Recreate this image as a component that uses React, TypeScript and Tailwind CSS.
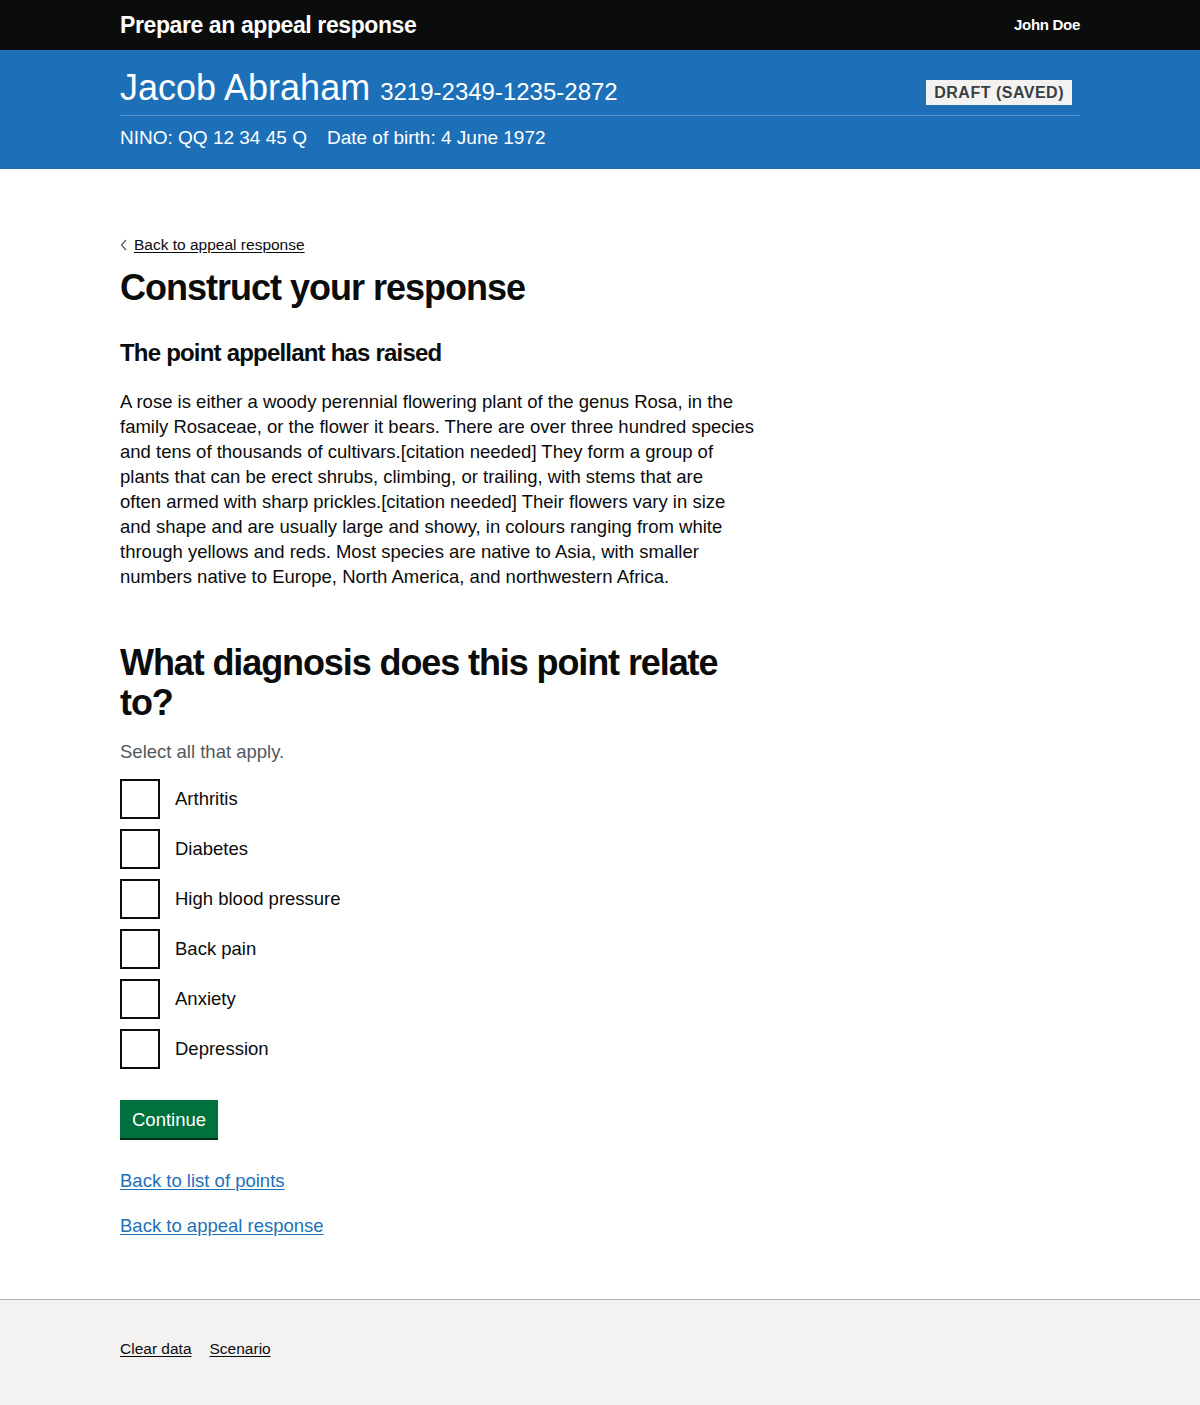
import { useState } from 'react';

const diagnoses = ['Arthritis', 'Diabetes', 'High blood pressure', 'Back pain', 'Anxiety', 'Depression'];

const pointLines = [
  'A rose is either a woody perennial flowering plant of the genus Rosa, in the',
  'family Rosaceae, or the flower it bears. There are over three hundred species',
  'and tens of thousands of cultivars.[citation needed] They form a group of',
  'plants that can be erect shrubs, climbing, or trailing, with stems that are',
  'often armed with sharp prickles.[citation needed] Their flowers vary in size',
  'and shape and are usually large and showy, in colours ranging from white',
  'through yellows and reds. Most species are native to Asia, with smaller',
  'numbers native to Europe, North America, and northwestern Africa.',
];

const font = "font-['Liberation_Sans',Arial,sans-serif]";

export default function App() {
  const [checked, setChecked] = useState<string[]>([]);

  const toggle = (d: string) =>
    setChecked(checked.includes(d) ? checked.filter((c) => c !== d) : [...checked, d]);

  return (
    <div className={`${font} min-h-[1405px] flex flex-col bg-white text-[#0b0c0c]`}>
      {/* Header */}
      <header className="bg-[#0b0c0c] h-[50px]">
        <div className="max-w-[960px] mx-auto h-full flex items-center justify-between">
          <span className="text-white font-bold text-[23px] tracking-[-0.4px]">Prepare an appeal response</span>
          <span className="text-white font-bold text-[15px] tracking-[-0.3px]">John Doe</span>
        </div>
      </header>

      {/* Appellant banner */}
      <div className="bg-[#1d70b8] text-white h-[119px]">
        <div className="max-w-[960px] mx-auto pt-[18px]">
          <div className="flex items-end justify-between border-b border-[#5694ca] pb-[5px]">
            <div className="flex items-baseline gap-[10px]">
              <span className="text-[36px] leading-[40px]">Jacob Abraham</span>
              <span className="text-[24px]">3219-2349-1235-2872</span>
            </div>
            <span className="mr-[8px] mb-[5px] bg-[#f3f2f1] text-[#383f43] font-bold uppercase text-[16px] tracking-[0.5px] leading-[25px] px-[8px]">
              Draft (saved)
            </span>
          </div>
          <div className="flex gap-[20px] text-[19px] pt-[8px]">
            <span>NINO: QQ 12 34 45 Q</span>
            <span>Date of birth: 4 June 1972</span>
          </div>
        </div>
      </div>

      {/* Main */}
      <main className="flex-1 pb-[60px]">
        <div className="max-w-[960px] mx-auto">
          <a href="#" className="inline-flex items-center gap-[6px] mt-[64px] text-[15.5px] text-[#0b0c0c] underline underline-offset-2">
            <svg width="8" height="12" viewBox="0 0 8 12" fill="none" stroke="#505a5f" strokeWidth="1.2">
              <path d="M6 1 L1.5 6 L6 11" />
            </svg>
            Back to appeal response
          </a>

          <div className="w-[640px]">
            <h1 className="text-[36px] leading-[40px] font-bold mt-[10px] mb-[30px] tracking-[-1px]">Construct your response</h1>

            <h2 className="text-[24px] leading-[30px] font-bold mb-[21px] tracking-[-0.8px]">The point appellant has raised</h2>
            <p className="text-[18.5px] leading-[25px] mb-[54px] whitespace-nowrap">
              {pointLines.map((line, i) => (
                <span key={i}>
                  {line}
                  {i < pointLines.length - 1 && <br />}
                </span>
              ))}
            </p>

            <h2 className="text-[36px] leading-[40px] font-bold mb-[16px] tracking-[-1.1px]">
              What diagnosis does this point relate to?
            </h2>
            <p className="text-[18.5px] leading-[25px] text-[#505a5f] mb-[15px]">Select all that apply.</p>

            <div className="flex flex-col gap-[10px] mb-[31px]">
              {diagnoses.map((d) => (
                <label key={d} className="flex items-center gap-[15px] cursor-pointer">
                  <span className="w-[40px] h-[40px] border-2 border-[#0b0c0c] flex items-center justify-center">
                    {checked.includes(d) && (
                      <svg width="22" height="14" viewBox="0 0 22 14">
                        <path d="M2 6 L8 12 L20 2" stroke="#0b0c0c" strokeWidth="4" fill="none" />
                      </svg>
                    )}
                  </span>
                  <input type="checkbox" className="hidden" checked={checked.includes(d)} onChange={() => toggle(d)} />
                  <span className="text-[18.5px]">{d}</span>
                </label>
              ))}
            </div>

            <button className="bg-[#00703c] text-white text-[18.5px] leading-[25px] px-[12px] pt-[7px] pb-[6px] shadow-[0_2px_0_#002d18] mb-[30px]">
              Continue
            </button>

            <div className="flex flex-col gap-[20px]">
              <a href="#" className="text-[18.5px] leading-[25px] text-[#1d70b8] underline underline-offset-2 w-fit">
                Back to list of points
              </a>
              <a href="#" className="text-[18.5px] leading-[25px] text-[#1d70b8] underline underline-offset-2 w-fit">
                Back to appeal response
              </a>
            </div>
          </div>
        </div>
      </main>

      {/* Footer */}
      <footer className="bg-[#f3f2f1] border-t border-[#b1b4b6] h-[106px]">
        <div className="max-w-[960px] mx-auto pt-[37px] flex gap-[18px] text-[15.5px]">
          <a href="#" className="underline underline-offset-2 text-[#0b0c0c]">Clear data</a>
          <a href="#" className="underline underline-offset-2 text-[#0b0c0c]">Scenario</a>
        </div>
      </footer>
    </div>
  );
}
